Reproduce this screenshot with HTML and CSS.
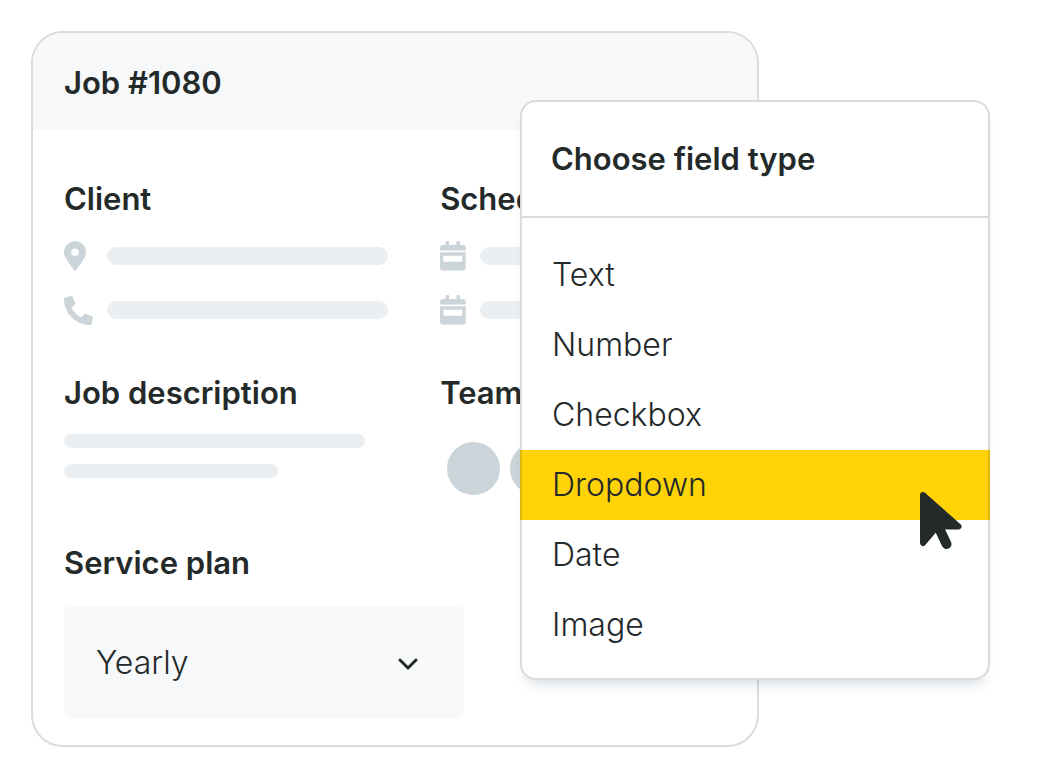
FILE: index.html
```html
<!DOCTYPE html>
<html lang="en">
<head>
<meta charset="utf-8">
<meta name="viewport" content="width=device-width, initial-scale=1">
<title>Job #1080</title>
<link rel="stylesheet" href="styles.css">
</head>
<body>
<svg class="sprite" aria-hidden="true">
  <symbol id="pin" viewBox="0 0 384 512"><path fill-rule="evenodd" d="M172 502C27 291 0 269 0 192 0 86 86 0 192 0s192 86 192 192c0 77-27 99-172 310-10 13-30 13-40 0zM192 258a66 66 0 1 0 0-132 66 66 0 0 0 0 132z"/></symbol>
  <symbol id="phone" viewBox="0 0 512 512"><path transform="translate(512 0) scale(-1 1)" d="M493.4 24.6l-104-24c-11.3-2.6-22.9 3.3-27.5 13.9l-48 112c-4.2 9.8-1.4 21.3 6.9 28l60.6 49.6c-36 76.7-98.9 140.5-177.2 177.2l-49.6-60.6c-6.8-8.3-18.2-11.1-28-6.9l-112 48C3.9 366.5-2 378.1.6 389.4l24 104C27.1 504.2 36.7 512 48 512c256.1 0 464-207.5 464-464 0-11.2-7.7-20.9-18.6-23.4z"/></symbol>
  <symbol id="calendar" viewBox="0 0 26 30"><path fill-rule="evenodd" d="M5.5 4V1.500a1.800 1.800 0 0 1 3.600 0V4h7.300V1.500a1.800 1.800 0 0 1 3.600 0V4h3a2.700 2.700 0 0 1 2.700 2.700V9.500H0V6.700A2.700 2.700 0 0 1 2.700 4zM0 11.300h25.700v15.500a2.700 2.700 0 0 1-2.700 2.700H2.700A2.700 2.700 0 0 1 0 26.800zM4.300 14.800a1 1 0 0 0-1 1v4a1 1 0 0 0 1 1h17a1 1 0 0 0 1-1v-4a1 1 0 0 0-1-1z"/></symbol>
</svg>
<main class="stage">
  <article class="job">
    <header class="job-header"><h1 class="heading">Job #1080</h1></header>
    <div class="job-body">
      <section class="contact">
        <h2 class="heading">Client</h2>
        <div class="row"><svg class="icon icon-pin"><use href="#pin"/></svg><span class="bar"></span></div>
        <div class="row"><svg class="icon icon-phone"><use href="#phone"/></svg><span class="bar"></span></div>
      </section>
      <section class="schedule">
        <h2 class="heading">Schedule</h2>
        <div class="row"><svg class="icon icon-calendar"><use href="#calendar"/></svg><span class="bar"></span></div>
        <div class="row"><svg class="icon icon-calendar"><use href="#calendar"/></svg><span class="bar"></span></div>
      </section>
      <section class="description">
        <h2 class="heading">Job description</h2>
        <span class="line line-long"></span>
        <span class="line line-short"></span>
      </section>
      <section class="team">
        <h2 class="heading">Team</h2>
        <div class="avatars"><span class="avatar"></span><span class="avatar"></span></div>
      </section>
      <section class="plan">
        <label class="heading" for="plan">Service plan</label>
        <div class="select-box">
          <select class="select" id="plan"><option>Yearly</option><option>Monthly</option></select>
          <svg class="chevron" viewBox="0 0 20 12" aria-hidden="true"><path d="M2 2l8 8 8-8"/></svg>
        </div>
      </section>
    </div>
  </article>
  <aside class="menu">
    <header class="menu-header"><h2 class="heading">Choose field type</h2></header>
    <ul class="menu-list">
      <li><button class="option" type="button">Text</button></li>
      <li><button class="option" type="button">Number</button></li>
      <li><button class="option" type="button">Checkbox</button></li>
      <li class="current">
        <button class="option option-active" type="button">Dropdown</button>
        <svg class="pointer" viewBox="0 0 42 58" aria-hidden="true"><path class="pointer-head" d="M3 3l35.500 31.500H17L3 51z"/><path class="pointer-stem" d="M19 36l7.500 16"/></svg>
      </li>
      <li><button class="option" type="button">Date</button></li>
      <li><button class="option" type="button">Image</button></li>
    </ul>
  </aside>
</main>
</body>
</html>
```

FILE: styles.css
```css
* { box-sizing: border-box; }

body {
  margin: 0;
  background: #fff;
  color: #24292a;
  font: 350 32px/40px Inter, "Liberation Sans", sans-serif;
}

.sprite { position: absolute; width: 0; height: 0; }

.stage { position: relative; padding: 31px; }

.heading {
  display: block;
  margin: 0;
  font-size: 31px;
  font-weight: 600;
  line-height: 40px;
}

.job {
  width: 70vw;
  border: 2px solid #d9dcdd;
  border-radius: 32px;
  overflow: hidden;
}

.job-header { padding: 30px 31px 27px; background: #f6f8fa; }

.job-body {
  display: grid;
  grid-template-columns: 25fr 19fr;
  padding: 49px 31px 27px;
}

.row { display: flex; align-items: center; gap: 14px; height: 30px; }
.heading + .row { margin-top: 22px; margin-bottom: 24px; }

.icon { flex: none; height: 30px; fill: #cbd4d9; }
.icon-pin { width: 22px; margin-right: 7px; }
.icon-phone { width: 29px; height: 29px; }
.icon-calendar { width: 26px; }

.bar { flex: 1; height: 18px; border-radius: 9px; background: #ebeff2; }
.contact { padding-right: 52px; }

.description, .team { padding-top: 48px; }

.line { display: block; height: 14px; border-radius: 7px; background: #ebeff2; }
.line-long { width: 80%; margin: 21px 0 16px; }
.line-short { width: 57%; }

.avatars { display: flex; gap: 10px; padding: 29px 0 0 7px; }
.avatar { width: 53px; height: 53px; border-radius: 50%; background: #cbd4d9; }

.plan { grid-column: 1 / -1; padding-top: 48px; }

.select-box { position: relative; max-width: 400px; margin-top: 23px; }

.select {
  appearance: none;
  display: block;
  width: 100%;
  height: 112px;
  padding: 2px 80px 0 32px;
  border: 0;
  border-radius: 7px;
  background: #f6f8fa;
  color: inherit;
  font: inherit;
}

.chevron {
  position: absolute;
  top: 52px;
  right: 46px;
  width: 20px;
  height: 12px;
  fill: none;
  stroke: #24292a;
  stroke-width: 3;
  stroke-linecap: round;
  stroke-linejoin: round;
  pointer-events: none;
}

.menu {
  position: absolute;
  top: 100px;
  left: 50%;
  right: 50px;
  border: 2px solid #d9dada;
  border-radius: 16px;
  background: #fff;
  box-shadow: 0 10px 12px -6px rgba(60, 85, 105, 0.2);
}

.menu-header { padding: 37px 29px; border-bottom: 2px solid #d9dada; }

.menu-list { margin: 0; padding: 22px 0 18px; list-style: none; }

.option {
  display: block;
  width: 100%;
  height: 70px;
  padding: 0 30px;
  border: 0;
  background: none;
  color: inherit;
  font: inherit;
  text-align: left;
}

.current { position: relative; margin: 0 -2px; }
.option-active { border: solid #dfb908; border-width: 0 2px; background: #ffd305; }

.pointer { position: absolute; top: 42px; right: 28px; width: 42px; height: 58px; fill: #24292a; stroke: #24292a; }
.pointer-head { stroke-width: 6; stroke-linejoin: round; }
.pointer-stem { stroke-width: 10; stroke-linecap: round; }
```
